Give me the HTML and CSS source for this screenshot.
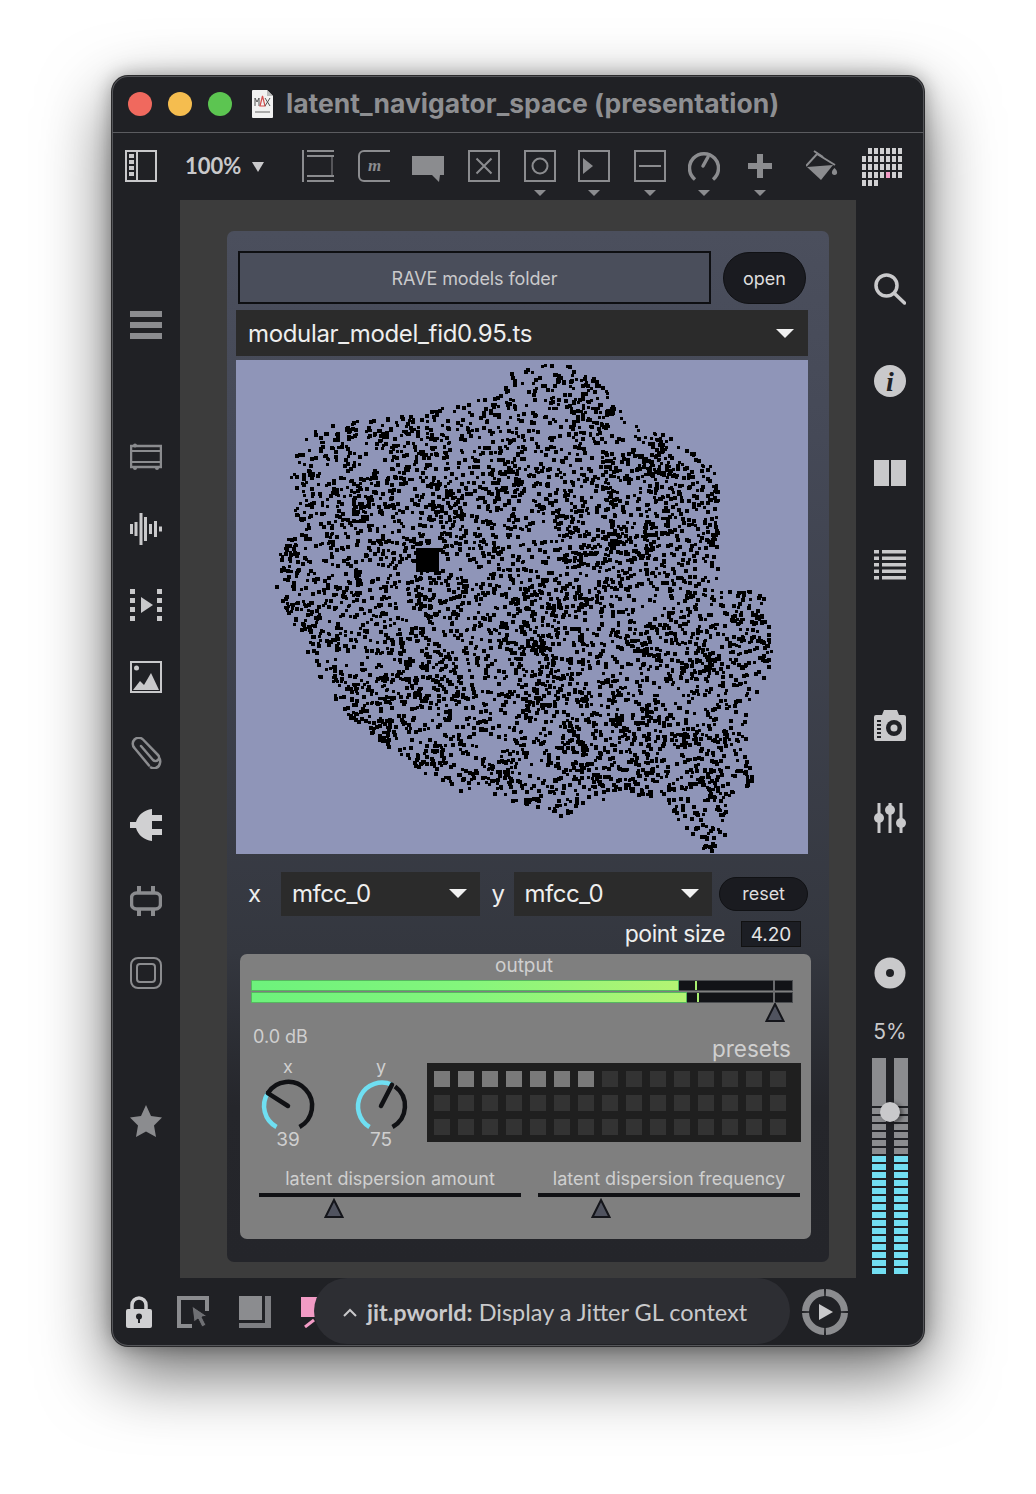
FILE: index.html
```html
<!DOCTYPE html>
<html lang="en">
<head>
<meta charset="utf-8">
<title>latent_navigator_space (presentation)</title>
<link rel="stylesheet" href="styles.css">
</head>
<body>
<div class="window">
  <header class="titlebar">
    <span class="light red"></span><span class="light yellow"></span><span class="light green"></span>
    <svg class="docicon" viewBox="0 0 21 28"><path d="M0 1a1 1 0 0 1 1-1H15L21 6V27a1 1 0 0 1-1 1H1a1 1 0 0 1-1-1z" fill="#f1f1f1"/><path d="M15 0V6H21z" fill="#bbb"/><path d="M3 16V8L5 12 7 8V16" fill="none" stroke="#555" stroke-width="1"/><path d="M8 16 10.500 6 13 16z" fill="none" stroke="#d4504f" stroke-width="1.200"/><path d="M13 8 18 16M18 8 13 16" fill="none" stroke="#555" stroke-width="1"/><rect x="3" y="21" width="15" height="2" fill="#aaa"/></svg>
    <span class="title">latent_navigator_space (presentation)</span>
  </header>

  <nav class="toolbar">
    <svg class="icon" viewBox="0 0 32 32"><rect x="1" y="1" width="30" height="30" fill="none" stroke="#c9c9cb" stroke-width="2"/><rect x="11" y="1" width="2" height="30" fill="#c9c9cb"/><g fill="#c9c9cb"><rect x="4" y="4" width="5" height="4"/><rect x="4" y="10" width="5" height="4"/><rect x="4" y="16" width="5" height="4"/><rect x="4" y="22" width="5" height="4"/></g></svg>
    <span class="zoomtext">100%</span>
    <span class="zoomcaret"></span>
    <div class="tools">
      <div class="tool"><svg class="icon" viewBox="0 0 32 32"><g fill="#8b8c8f"><rect width="2" height="32"/><rect x="5" width="27" height="2"/><rect x="5" y="5" width="27" height="2"/><rect x="5" y="25" width="27" height="2"/><rect x="5" y="30" width="27" height="2"/><rect x="29.500" y="7" width="1" height="18"/></g></svg></div>
      <div class="tool"><svg class="icon" viewBox="0 0 32 32"><path d="M32 1H6a5 5 0 0 0-5 5V26a5 5 0 0 0 5 5H32" fill="none" stroke="#8b8c8f" stroke-width="2"/><text x="10" y="21" class="mglyph">m</text></svg></div>
      <div class="tool tight"><svg class="icon" viewBox="0 0 32 32"><path d="M0 6H32V25H28L27 32 20 25H0z" fill="#8b8c8f"/></svg></div>
      <div class="tool"><svg class="icon" viewBox="0 0 32 32"><rect x="1" y="1" width="30" height="30" fill="none" stroke="#8b8c8f" stroke-width="2"/><path d="M8.500 8.500 23.500 23.500M23.500 8.500 8.500 23.500" stroke="#8b8c8f" stroke-width="2"/></svg></div>
      <div class="tool"><svg class="icon" viewBox="0 0 32 32"><rect x="1" y="1" width="30" height="30" fill="none" stroke="#8b8c8f" stroke-width="2"/><circle cx="16" cy="16" r="7.500" fill="none" stroke="#8b8c8f" stroke-width="2"/></svg><span class="caret"></span></div>
      <div class="tool tight"><svg class="icon" viewBox="0 0 32 32"><rect x="1" y="1" width="30" height="30" fill="none" stroke="#8b8c8f" stroke-width="2"/><path d="M5 8 15 16 5 24z" fill="#8b8c8f"/></svg><span class="caret"></span></div>
      <div class="tool"><svg class="icon" viewBox="0 0 32 32"><rect x="1" y="1" width="30" height="30" fill="none" stroke="#8b8c8f" stroke-width="2"/><rect x="5" y="15" width="22" height="2" fill="#8b8c8f"/></svg><span class="caret"></span></div>
      <div class="tool tight"><svg class="icon" viewBox="0 0 32 32"><path d="M7 29.500A14.500 14.500 0 1 1 25 29.500" fill="none" stroke="#8b8c8f" stroke-width="3.500"/><path d="M15 16 20 7" fill="none" stroke="#8b8c8f" stroke-width="3.500" stroke-linecap="round"/></svg><span class="caret"></span></div>
      <div class="tool"><svg class="icon" viewBox="0 0 32 32"><path d="M13 4H19V13H28V19H19V28H13V19H4V13H13z" fill="#8b8c8f"/></svg><span class="caret"></span></div>
      <div class="tool wide"><svg class="icon" viewBox="0 0 32 32"><path d="M0 16 11 4 29 15" fill="none" stroke="#8b8c8f" stroke-width="2"/><path d="M8 1 17 7" stroke="#8b8c8f" stroke-width="2"/><path d="M1 17 27 15 15 30z" fill="#8b8c8f"/><path d="M28.500 18C25 21 25 25 28.500 25 32 25 32 21 28.500 18z" fill="#8b8c8f"/></svg></div>
      <svg class="gridicon" viewBox="0 0 40 38"><g fill="#d0d0d2"><rect x="6" width="4" height="6"/><rect x="12" width="4" height="6"/><rect x="18" width="4" height="6"/><rect x="24" width="4" height="6"/><rect x="30" width="4" height="6"/><rect x="36" width="4" height="6"/><rect y="8" width="4" height="6"/><rect x="6" y="8" width="4" height="6"/><rect x="12" y="8" width="4" height="6"/><rect x="18" y="8" width="4" height="6"/><rect x="24" y="8" width="4" height="6"/><rect x="30" y="8" width="4" height="6"/><rect x="36" y="8" width="4" height="6"/><rect y="16" width="4" height="6"/><rect x="6" y="16" width="4" height="6"/><rect x="12" y="16" width="4" height="6"/><rect x="18" y="16" width="4" height="6"/><rect x="24" y="16" width="4" height="6"/><rect x="30" y="16" width="4" height="6"/><rect x="36" y="16" width="4" height="6"/><rect y="24" width="4" height="6"/><rect x="6" y="24" width="4" height="6"/><rect x="12" y="24" width="4" height="6"/><rect x="18" y="24" width="4" height="6"/><rect x="30" y="24" width="4" height="6"/><rect x="36" y="24" width="4" height="6"/><rect y="32" width="4" height="6"/><rect x="6" y="32" width="4" height="6"/><rect x="12" y="32" width="4" height="6"/></g><rect x="24" y="24" width="4" height="6" fill="#f29bc5"/></svg>
    </div>
  </nav>

  <div class="main">
    <aside class="side side-left">
      <svg class="icon" viewBox="0 0 32 32"><g fill="#8b8c8f"><rect y="2" width="32" height="6"/><rect y="13" width="32" height="6"/><rect y="24" width="32" height="6"/></g></svg>
      <svg class="icon after-menu" viewBox="0 0 32 32"><rect x="1" y="5" width="30" height="21" fill="none" stroke="#8b8c8f" stroke-width="2.500"/><path d="M2 10H30M2 21H30" stroke="#8b8c8f" stroke-width="2"/><g fill="#8b8c8f"><circle cx="5" cy="4.500" r="2"/><circle cx="5" cy="27" r="2"/><circle cx="27" cy="27" r="2"/></g></svg>
      <svg class="icon" viewBox="0 0 32 32"><g fill="#c9c9cb"><rect y="11" width="3" height="10"/><rect x="4.500" y="9" width="3" height="14"/><rect x="9.500" width="3" height="32"/><rect x="14" y="4" width="3" height="24"/><rect x="19" y="11" width="3" height="10"/><rect x="24" y="8" width="3" height="16"/><rect x="29" y="13.500" width="3" height="5"/></g></svg>
      <svg class="icon more" viewBox="0 0 32 32"><g fill="#c9c9cb"><rect width="5" height="5"/><rect y="9" width="5" height="5"/><rect y="18" width="5" height="5"/><rect y="27" width="5" height="5"/><rect x="27" width="5" height="5"/><rect x="27" y="9" width="5" height="5"/><rect x="27" y="18" width="5" height="5"/><rect x="27" y="27" width="5" height="5"/><path d="M11 8 23 16 11 24z"/></g></svg>
      <svg class="icon" viewBox="0 0 32 32"><rect x="1" y="1" width="30" height="30" fill="none" stroke="#c9c9cb" stroke-width="2"/><circle cx="6.500" cy="7" r="2.500" fill="#c9c9cb"/><path d="M3 29 10 20 14 24 21 12 29 29z" fill="#c9c9cb"/></svg>
      <svg class="icon more" viewBox="0 0 32 32"><path d="M10 10 22 24a3.500 3.500 0 0 0 5-5L12 3.500a6 6 0 0 0-8.500 8.500L18 29.500a1 1 0 0 0 0 0" fill="none" stroke="#8b8c8f" stroke-width="2.500" stroke-linecap="round" transform="translate(1 -1)"/><path d="M20 30C23 32 29 32 30 26 30.500 24 30 22 29 21" fill="none" stroke="#8b8c8f" stroke-width="2.500"/></svg>
      <svg class="icon" viewBox="0 0 32 32"><path d="M0 13H6C8 6 14 1 22 0V6H32V12H22V20H32V26H22V32C14 31 8 26 6 19H0z" fill="#d0d0d2"/></svg>
      <svg class="icon more" viewBox="0 0 32 32"><rect x="1.500" y="8" width="29" height="16" rx="5" fill="none" stroke="#8b8c8f" stroke-width="3.500"/><path d="M9 1V8M23 1V8M9 24V31M23 24V31" stroke="#8b8c8f" stroke-width="4"/></svg>
      <svg class="icon" viewBox="0 0 32 32"><rect x="1" y="1" width="30" height="30" rx="7" fill="none" stroke="#8b8c8f" stroke-width="2"/><rect x="7" y="7" width="18" height="18" rx="3" fill="none" stroke="#8b8c8f" stroke-width="2"/></svg>
      <svg class="icon after-disc" viewBox="0 0 32 32"><path d="M16 0 21 11 32 12.500 24 20.500 26 32 16 26.500 6 32 8 20.500 0 12.500 11 11z" fill="#8b8c8f"/></svg>
    </aside>

    <section class="patch">
      <div class="panel">
        <div class="row-top">
          <div class="rave">RAVE models folder</div>
          <div class="open">open</div>
        </div>
        <div class="menu">
          <span>modular_model_fid0.95.ts</span>
          <span class="dropcaret"></span>
        </div>
        <canvas class="scatter" id="scatter" width="572" height="494"></canvas>
        <div class="row-xy">
          <span class="axis">x</span>
          <div class="pick"><span>mfcc_0</span><span class="dropcaret"></span></div>
          <span class="axis axis-y">y</span>
          <div class="pick"><span>mfcc_0</span><span class="dropcaret"></span></div>
          <div class="reset">reset</div>
        </div>
        <div class="row-size">
          <span class="sizelabel">point size</span>
          <span class="sizebox">4.20</span>
        </div>
        <div class="graypanel">
          <div class="outlabel">output</div>
          <div class="levels">
            <div class="level"><span class="fill fill-a"></span><span class="peak peak-a"></span></div>
            <div class="level"><span class="fill fill-b"></span><span class="peak peak-b"></span></div>
            <span class="zeroline"></span>
          </div>
          <svg class="tri tri-out" viewBox="0 0 20 20"><path d="M10 2 18.500 19H1.500z" fill="#50535f" stroke="#14151a" stroke-width="2"/></svg>
          <div class="row-db">
            <span class="db">0.0 dB</span>
            <span class="presets">presets</span>
          </div>
          <div class="row-controls">
            <div class="knob">
              <span class="knoblabel">x</span>
              <svg class="knobsvg" viewBox="0 0 60 60"><path d="M9.800 17.100A24 24 0 1 1 41.500 51" fill="none" stroke="#101114" stroke-width="4.500"/><path d="M18.500 51A24 24 0 0 1 9.800 17.100" fill="none" stroke="#6fdff2" stroke-width="4.500"/><path d="M30 30 9.800 17.100" stroke="#101114" stroke-width="4.500" stroke-linecap="round"/></svg>
              <span class="knobvalue">39</span>
            </div>
            <div class="knob">
              <span class="knoblabel">y</span>
              <svg class="knobsvg" viewBox="0 0 60 60"><path d="M44 10.500A24 24 0 0 1 41.500 51" fill="none" stroke="#101114" stroke-width="4.500"/><path d="M18.500 51A24 24 0 0 1 41 8.700" fill="none" stroke="#6fdff2" stroke-width="4.500"/><path d="M30 30 41 8.700" stroke="#101114" stroke-width="4.500" stroke-linecap="round"/></svg>
              <span class="knobvalue">75</span>
            </div>
            <div class="matrix" id="matrix">
              <i class="on"></i><i class="on"></i><i class="on"></i><i class="on"></i><i class="on"></i><i class="on"></i><i class="on"></i><i></i><i></i><i></i><i></i><i></i><i></i><i></i><i></i>
              <i></i><i></i><i></i><i></i><i></i><i></i><i></i><i></i><i></i><i></i><i></i><i></i><i></i><i></i><i></i>
              <i></i><i></i><i></i><i></i><i></i><i></i><i></i><i></i><i></i><i></i><i></i><i></i><i></i><i></i><i></i>
            </div>
          </div>
          <div class="row-sliders">
            <div class="hslider">
              <span class="hlabel">latent dispersion amount</span>
              <span class="hline"></span>
              <svg class="tri tri-a" viewBox="0 0 20 20"><path d="M10 2 18.500 19H1.500z" fill="#50535f" stroke="#14151a" stroke-width="2"/></svg>
            </div>
            <div class="hslider">
              <span class="hlabel">latent dispersion frequency</span>
              <span class="hline"></span>
              <svg class="tri tri-b" viewBox="0 0 20 20"><path d="M10 2 18.500 19H1.500z" fill="#50535f" stroke="#14151a" stroke-width="2"/></svg>
            </div>
          </div>
        </div>
      </div>
    </section>

    <aside class="side side-right">
      <svg class="icon" viewBox="0 0 32 32"><circle cx="12.500" cy="12.500" r="10.500" fill="none" stroke="#c9c9cb" stroke-width="3.500"/><path d="M20.500 20.500 30.500 30" stroke="#c9c9cb" stroke-width="3.500" stroke-linecap="round"/></svg>
      <svg class="icon" viewBox="0 0 32 32"><circle cx="16" cy="16" r="16" fill="#c9c9cb"/><text x="16" y="26" class="iglyph">i</text></svg>
      <svg class="icon" viewBox="0 0 32 32"><g fill="#c9c9cb"><rect y="3" width="15" height="26"/><rect x="17" y="3" width="15" height="26"/></g></svg>
      <svg class="icon" viewBox="0 0 32 32"><g fill="#c9c9cb"><rect y="1" width="5" height="3.500"/><rect y="7.500" width="5" height="3.500"/><rect y="14" width="5" height="3.500"/><rect y="20.500" width="5" height="3.500"/><rect y="27" width="5" height="3.500"/><rect x="8" y="1" width="24" height="3.500"/><rect x="8" y="7.500" width="24" height="3.500"/><rect x="8" y="14" width="24" height="3.500"/><rect x="8" y="20.500" width="24" height="3.500"/><rect x="8" y="27" width="24" height="3.500"/></g></svg>
      <svg class="icon after-list" viewBox="0 0 32 32"><path d="M2 5H8L10 0H23L25 5H30a2 2 0 0 1 2 2V29a2 2 0 0 1-2 2H2a2 2 0 0 1-2-2V7a2 2 0 0 1 2-2z" fill="#c9c9cb"/><circle cx="20" cy="18" r="8" fill="#202125"/><circle cx="20" cy="18" r="3.500" fill="#c9c9cb"/><g fill="#202125"><rect x="3" y="10" width="4" height="2"/><rect x="3" y="14" width="4" height="2"/><rect x="3" y="18" width="4" height="2"/><rect x="3" y="22" width="4" height="2"/><rect x="3" y="26" width="4" height="2"/></g></svg>
      <svg class="icon" viewBox="0 0 32 32"><g fill="#c9c9cb"><rect x="3.500" y="1" width="3" height="30"/><rect x="14.500" y="1" width="3" height="30"/><rect x="25.500" y="1" width="3" height="30"/><circle cx="5" cy="16" r="5"/><circle cx="16" cy="8" r="5"/><circle cx="27" cy="21" r="5"/></g></svg>
      <svg class="icon after-sliders" viewBox="0 0 32 32"><circle cx="16" cy="16" r="15.500" fill="#c9c9cb"/><circle cx="16" cy="16" r="4" fill="#202125"/></svg>
      <span class="percent">5%</span>
      <div class="volume">
        <div class="volcol"></div>
        <div class="volcol"></div>
        <span class="volthumb"></span>
      </div>
    </aside>
  </div>

  <footer class="bottom">
    <svg class="lock" viewBox="0 0 26 32"><path d="M6 14V9a7 7 0 0 1 14 0V14" fill="none" stroke="#d0d0d2" stroke-width="3.500"/><rect y="13" width="26" height="19" rx="2" fill="#d0d0d2"/><circle cx="13" cy="20.500" r="3" fill="#202125"/><rect x="12" y="21" width="2" height="6" fill="#202125"/></svg>
    <svg class="icon b-select" viewBox="0 0 32 32"><path d="M30 15V2H2V30H15" fill="none" stroke="#8b8c8f" stroke-width="4"/><path d="M15 10 17 26 21 23 25 31 29 29 25 21 30 20z" fill="#6f7074" stroke="#202125"/></svg>
    <svg class="icon b-stack" viewBox="0 0 32 32"><rect width="23" height="24" fill="#8b8c8f"/><path d="M26 0H32V32H0V27H26z" fill="#7d7e82"/></svg>
    <svg class="icon b-pink" viewBox="0 0 32 32"><rect x="1" y="1" width="24" height="20" fill="#f29bc5"/><path d="M5 31 14 24" stroke="#f29bc5" stroke-width="3"/></svg>
    <div class="pill">
      <svg class="chev" viewBox="0 0 14 9"><path d="M1 8 7 2 13 8" fill="none" stroke="#c9c9cb" stroke-width="2"/></svg>
      <span class="hint"><b>jit.pworld:</b> Display a Jitter GL context</span>
    </div>
    <svg class="playdial" viewBox="0 0 46 46"><circle cx="23" cy="23" r="19.500" fill="none" stroke="#8b8c8f" stroke-width="7" pathLength="100" stroke-dasharray="23.500 1.500" stroke-dashoffset="-0.750"/><path d="M17 15 31 23 17 31z" fill="#c9c9cb"/></svg>
  </footer>
</div>
<script src="scatter.js"></script>
</body>
</html>
```

FILE: styles.css
```css
* { box-sizing: border-box; }
html, body { margin: 0; padding: 0; background: #fff; }
body { width: 1036px; height: 1494px; padding: 76px 112px 0; overflow: hidden; font-family: "Lato", sans-serif; }
svg { display: block; flex: none; }

.window {
  width: 812px; height: 1270px; display: flex; flex-direction: column;
  background: #202125; border-radius: 16px; overflow: hidden;
  box-shadow: 0 0 0 1px #2a2a2c, inset 0 0 0 1px #55565a, 0 26px 70px rgba(0,0,0,.6), 0 0 20px rgba(0,0,0,.35);
}

.titlebar { height: 57px; flex: none; display: flex; align-items: center; padding: 0 0 1px 16px; border-bottom: 1px solid #5b5c60; }
.light { width: 24px; height: 24px; border-radius: 50%; margin-right: 16px; }
.red { background: #f0695e; }
.yellow { background: #f5bd4f; }
.green { background: #5cc551; }
.docicon { width: 21px; height: 28px; margin-left: 4px; margin-right: 13px; }
.title { font-family: "Inter", sans-serif; font-size: 26.500px; font-weight: 700; color: #8e8f92; white-space: nowrap; margin-top: -2px; }

.toolbar { height: 67px; flex: none; display: flex; align-items: flex-start; padding: 17px 0 0 13px; }
.icon { width: 32px; height: 32px; }
.zoomtext { margin-left: 28px; line-height: 32px; font-size: 22px; font-weight: 700; color: #c9c9cb; width: 56px; }
.zoomcaret { width: 0; height: 0; margin: 12px 0 0 11px; border-left: 6px solid transparent; border-right: 6px solid transparent; border-top: 10px solid #c9c9cb; }
.tools { display: flex; align-items: flex-start; gap: 24px; margin-left: 38px; }
.tool { width: 32px; display: flex; flex-direction: column; align-items: center; gap: 8px; }
.tight { margin-left: -2px; }
.wide { margin-left: 6px; }
.caret { width: 0; height: 0; border-left: 6px solid transparent; border-right: 6px solid transparent; border-top: 6px solid #8b8c8f; }
.gridicon { width: 40px; height: 38px; margin: -2px 0 0 0; }
.mglyph { font: italic bold 17px "Liberation Serif", serif; fill: #8b8c8f; }
.iglyph { font: italic bold 28px "Liberation Serif", serif; fill: #202125; text-anchor: middle; }

.main { flex: 1; display: flex; min-height: 0; }
.side { width: 68px; flex: none; display: flex; flex-direction: column; align-items: center; }
.side-left { padding-top: 109px; gap: 40px; padding-left: 0; }
.more { margin-top: 4px; }
.after-menu { margin-top: 60px; }
.after-disc { margin-top: 76px; }
.side-right { padding-top: 73px; gap: 60px; }
.after-list { margin-top: 69px; }
.after-sliders { margin-top: 63px; }
.percent { margin-top: -29px; font: 21px/24px "Inter", sans-serif; color: #c9c9cb; }
.volume { position: relative; margin-top: -46px; display: flex; gap: 8px; width: 36px; height: 216px; }
.volcol { width: 14px; height: 216px; background:
  linear-gradient(#8b8c8f, #8b8c8f) 0 0 / 14px 48px no-repeat,
  repeating-linear-gradient(#8b8c8f 0 6px, transparent 6px 8px) 0 50px / 14px 48px no-repeat,
  repeating-linear-gradient(#72def2 0 6px, transparent 6px 8px) 0 98px / 14px 118px no-repeat; }
.volthumb { position: absolute; left: 8px; top: 44px; width: 20px; height: 20px; border-radius: 50%; background: #c9c9cb; box-shadow: 3px 1px 4px rgba(0,0,0,.45); }

.patch { flex: 1; background: #3c3c3c; padding: 31px 0 0 47px; }
.panel {
  width: 602px; height: 1031px; border-radius: 7px; padding-top: 20px; overflow: hidden;
  background: linear-gradient(#4b4f5d 0, #454957 20%, #34373f 70%, #25262b 85%, #24252a 100%);
  font-family: "Inter", sans-serif;
}
.row-top { display: flex; align-items: flex-start; margin-left: 11px; gap: 12px; }
.rave { width: 473px; height: 53px; padding-top: 2px; border: 2px solid #0e0f12; background: #4a4e5b; color: #c9c9cb; font-size: 18px; letter-spacing: -.1px; display: flex; align-items: center; justify-content: center; }
.open { width: 83px; height: 52px; padding-top: 1px; margin-top: 1px; border-radius: 26px; background: #1a1b20; color: #dedede; font-size: 18px; display: flex; align-items: center; justify-content: center; border: 1px solid #101114; }
.menu { margin: 6px 0 0 9px; width: 572px; height: 46px; background: #2b2b2b; color: #eee; font-size: 24px; letter-spacing: -.33px; display: flex; align-items: center; justify-content: space-between; padding: 0 14px 0 12px; }
.dropcaret { width: 0; height: 0; border-left: 9px solid transparent; border-right: 9px solid transparent; border-top: 9px solid #f1f1f1; }
.scatter { display: block; margin: 4px 0 0 9px; width: 572px; height: 494px; background: #8f95b8; }

.row-xy { margin: 18px 0 0 9px; width: 572px; height: 44px; display: flex; align-items: center; color: #eee; font-size: 24px; }
.axis { width: 45px; padding-left: 12px; line-height: 44px; }
.axis-y { width: 34px; }
.pick { width: 199px; height: 44px; padding: 0 13px 2px 11px; letter-spacing: -.5px; background: #2b2b2b; display: flex; align-items: center; justify-content: space-between; }
.reset { width: 89px; height: 34px; margin-left: 7px; padding-bottom: 1px; border-radius: 17px; background: #1a1b20; border: 1px solid #101114; color: #dedede; font-size: 18px; display: flex; align-items: center; justify-content: center; }

.row-size { margin: 5px 0 0 9px; width: 572px; height: 26px; display: flex; justify-content: flex-end; align-items: center; gap: 16px; padding-right: 7px; }
.sizelabel { color: #eee; font-size: 23px; letter-spacing: -.42px; }
.sizebox { width: 60px; height: 26px; background: #1c1e24; border: 1px solid #111; color: #e4e4e4; font-size: 19px; display: flex; align-items: center; justify-content: center; }

.graypanel { margin: 7px 0 0 13px; width: 571px; height: 285px; border-radius: 7px; background: #7f7f7f; color: #cfcfcf; overflow: hidden; }
.outlabel { height: 23px; padding-right: 3px; text-align: center; font-size: 19px; line-height: 24px; }
.levels { position: relative; margin: 3px 0 0 11px; width: 542px; display: flex; flex-direction: column; gap: 1px; }
.level { position: relative; height: 11px; background: #121317; box-shadow: inset 0 0 0 1px #4b4d50; }
.fill { position: absolute; left: 0; top: 0; height: 100%; background: linear-gradient(90deg, #6df27c, #84f67c 50%, #b3f473); border: 1px solid #56b85f; }
.fill-a { width: 428px; }
.fill-b { width: 436px; }
.peak { position: absolute; top: 1px; bottom: 1px; width: 2px; background: #a8ee70; }
.peak-a { left: 444px; }
.peak-b { left: 446px; }
.zeroline { position: absolute; left: 522px; top: 0; bottom: 0; width: 2px; background: #6a6b6e; }
.tri { width: 20px; height: 20px; }
.tri-out { margin-left: 525px; margin-top: -1px; }
.row-db { margin-top: 2px; height: 38px; display: flex; justify-content: space-between; padding: 1px 20px 0 13px; }
.db { font-size: 18px; line-height: 24px; }
.presets { align-self: flex-end; margin-bottom: 1px; font-size: 22.500px; line-height: 24px; }
.row-controls { height: 79px; margin-top: 1px; display: flex; align-items: flex-start; padding-left: 18px; }
.knob { width: 60px; margin-top: -5px; margin-right: 33px; display: flex; flex-direction: column; align-items: center; }
.knob + .knob { margin-right: 16px; }
.knoblabel { height: 18px; line-height: 18px; font-size: 18px; }
.knobsvg { width: 60px; height: 60px; }
.knobvalue { margin-top: -6px; line-height: 20px; font-size: 19px; }
.matrix { width: 374px; height: 79px; background: #1f1f1f; padding: 8px 7px; display: grid; grid-template-columns: repeat(15, 16px); grid-auto-rows: 16px; gap: 8px; }
.matrix i { display: block; background: #333; }
.matrix i.on { background: #7a7a7a; }
.row-sliders { margin: 26px 0 0 19px; display: flex; gap: 17px; }
.hslider { width: 262px; display: flex; flex-direction: column; }
.hlabel { height: 22px; line-height: 22px; text-align: center; font-size: 18px; white-space: nowrap; }
.hline { display: block; height: 4px; margin-top: 3px; background: #101114; }
.tri-a { margin: 1px 0 0 65px; }
.tri-b { margin: 1px 0 0 53px; }

.bottom { height: 68px; flex: none; display: flex; align-items: flex-start; padding-left: 14px; }
.lock { width: 26px; height: 32px; margin-top: 18px; }
.b-select { margin: 18px 0 0 25px; }
.b-stack { margin: 18px 0 0 30px; }
.b-pink { margin: 18px 0 0 29px; }
.pill { position: relative; margin-left: -18px; width: 476px; height: 66px; border-radius: 33px; background: #2d2e33; display: flex; align-items: center; padding: 2px 0 0 29px; color: #c9c9cb; font-size: 23.500px; }
.chev { width: 14px; height: 9px; margin-right: 10px; }
.hint { white-space: nowrap; }
.hint b { font-weight: 700; }
.playdial { width: 46px; height: 46px; margin: 11px 0 0 12px; }
```

FILE: scatter.js
```js
(function () {
  var canvas = document.getElementById('scatter');
  var ctx = canvas.getContext('2d');
  var ox = 236, oy = 360;
  var outline = [
    [530,362],[565,362],[600,380],[625,420],[680,440],[715,470],[722,500],[715,540],[720,580],
    [765,595],[771,660],[750,700],[745,740],[752,780],[725,800],[725,830],[708,853],[690,840],
    [665,800],[620,790],[560,815],[500,795],[465,795],[420,770],[350,720],[320,680],[290,620],
    [275,590],[275,550],[295,520],[288,460],[310,428],[360,418],[420,413],[465,398],[500,393],[510,370]
  ];
  function inside(x, y) {
    var hit = false;
    for (var i = 0, j = outline.length - 1; i < outline.length; j = i++) {
      var a = outline[i], b = outline[j];
      if ((a[1] > y) !== (b[1] > y) && x < (b[0] - a[0]) * (y - a[1]) / (b[1] - a[1]) + a[0]) hit = !hit;
    }
    return hit;
  }
  var seed = 1234567;
  function rnd() { seed = (seed * 16807) % 2147483647; return seed / 2147483647; }
  ctx.fillStyle = '#8f95b8';
  ctx.fillRect(0, 0, canvas.width, canvas.height);
  ctx.fillStyle = '#000';
  function dot(x, y) {
    var size = rnd() > 0.45 ? 4 : 3;
    ctx.fillRect(Math.round(x - ox), Math.round(y - oy), size, size);
  }
  var count = 0, cx, cy, left = 0;
  while (count < 5000) {
    var x, y;
    if (left > 0 && rnd() < 0.6) {
      left--;
      x = cx + (rnd() - 0.5) * 22;
      y = cy + (rnd() - 0.5) * 22;
    } else {
      x = 270 + rnd() * 505;
      y = 360 + rnd() * 495;
      if (rnd() < 0.08) { cx = x; cy = y; left = 5; }
    }
    if (!inside(x, y)) continue;
    dot(x, y);
    count++;
  }
  ctx.fillRect(416 - ox, 548 - oy, 23, 24);
})();
```
